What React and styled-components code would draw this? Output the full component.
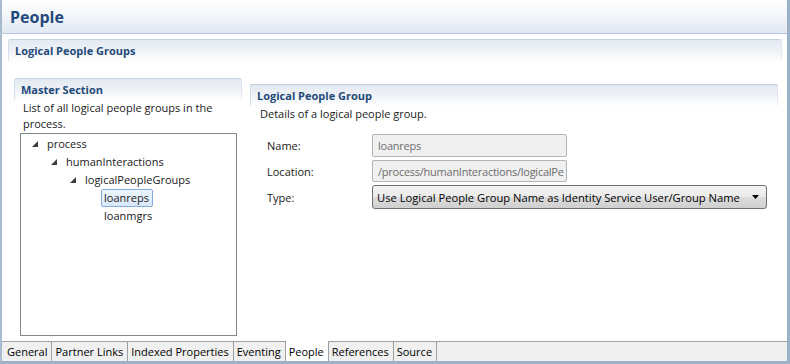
import styled, { createGlobalStyle } from 'styled-components'

const GlobalStyle = createGlobalStyle`
  body {
    margin: 0;
    background: #ffffff;
    font-family: "Open Sans", "Noto Sans", sans-serif;
    font-size: 11px;
    color: #1a1a1a;
  }
`

const Window = styled.div`
  width: 790px;
  height: 364px;
  box-sizing: border-box;
  border-left: 2px solid #a7bace;
  border-right: 3px solid #9db1c6;
  border-bottom: 3px solid #9db1c6;
  display: flex;
  flex-direction: column;
  background: #ffffff;
  overflow: hidden;
`

const TitleBar = styled.div`
  height: 34px;
  box-sizing: border-box;
  flex: none;
  padding-left: 8px;
  display: flex;
  align-items: center;
  background: linear-gradient(to bottom, #ffffff 0%, #f5f7fb 40%, #e1e8f2 100%);
  border-bottom: 1px solid #b4c7dc;
  font-size: 16px;
  font-weight: 700;
  color: #1f4a79;
`

const Content = styled.div`
  flex: 1;
  padding: 5px 5px 0 6px;
  display: flex;
  flex-direction: column;
  min-height: 0;
`

const SectionHead = styled.div`
  height: 22px;
  box-sizing: border-box;
  flex: none;
  display: flex;
  align-items: center;
  padding-left: 6px;
  border: 1px solid #c3d2e3;
  border-bottom: none;
  border-radius: ${p => (p.$square ? '0' : '3px 3px 0 0')};
  border-color: #c3d2e3 rgba(195, 210, 227, 0.3) transparent rgba(195, 210, 227, 0.6);
  background: linear-gradient(to bottom, #e3e9f2 0%, #f1f4f9 60%, #ffffff 100%);
  font-weight: 700;
  color: #1f4a79;
  white-space: nowrap;
`

const Body = styled.div`
  flex: 1;
  display: flex;
  gap: 8px;
  padding: 17px 4px 0 6px;
  min-height: 0;
`

const MasterColumn = styled.div`
  width: 228px;
  flex: none;
  display: flex;
  flex-direction: column;
`

const DetailColumn = styled.div`
  flex: 1;
  margin-top: 6px;
  display: flex;
  flex-direction: column;
`

const Description = styled.div`
  padding: 0 10px 0 ${p => p.$left || 9}px;
  line-height: 16px;
  color: #1a1a1a;
`

const TreeBox = styled.div`
  margin: 1px 5px 5px 6px;
  flex: 1;
  border: 1px solid #828790;
  background: #ffffff;
  padding-top: 1px;
`

const TreeRow = styled.div`
  height: 18px;
  display: flex;
  align-items: center;
  padding-left: ${p => 11 + p.$level * 19}px;
`

const Twisty = styled.span`
  width: 12px;
  height: 18px;
  flex: none;
  display: flex;
  align-items: center;
  justify-content: flex-start;
`

const Label = styled.span`
  padding: 0 3px 0 2px;
  line-height: 16px;
  border: 1px solid ${p => (p.$selected ? '#84acdd' : 'transparent')};
  border-radius: 2px;
  background: ${p => (p.$selected ? 'linear-gradient(to bottom, #eef5fd, #d9e8fb)' : 'transparent')};
`

const Form = styled.div`
  padding: 12px 0 0 17px;
  display: grid;
  grid-template-columns: 105px 1fr;
  row-gap: 3px;
  align-items: center;
`

const FieldLabel = styled.div`
  color: #1a1a1a;
`

const TextBox = styled.div`
  width: 195px;
  height: ${p => p.$h || 23}px;
  box-sizing: border-box;
  border: 1px solid #b3b3b3;
  border-radius: 2px;
  background: #f0f0f0;
  color: #6d6d6d;
  display: flex;
  align-items: center;
  padding-left: 5px;
  letter-spacing: -0.25px;
  white-space: nowrap;
  overflow: hidden;
`

const Combo = styled.div`
  width: 395px;
  height: 24px;
  box-sizing: border-box;
  border: 1px solid #707070;
  border-radius: 3px;
  background: linear-gradient(to bottom, #f3f3f3 0%, #ebebeb 50%, #dddddd 51%, #cfcfcf 100%);
  display: flex;
  align-items: center;
  justify-content: space-between;
  padding: 0 7px 0 4px;
  color: #000000;
  white-space: nowrap;
  font-size: 11.2px;
`

const TabBar = styled.div`
  height: 20px;
  box-sizing: border-box;
  flex: none;
  display: flex;
  padding-left: 2px;
  border-top: 1px solid #a0a0a0;
  background: #f0f0f0;
`

const Tab = styled.div`
  padding: 0 4px 0 3px;
  display: flex;
  align-items: center;
  border-right: 1px solid #a0a0a0;
  background: ${p => (p.$active ? '#ffffff' : 'transparent')};
  margin-top: ${p => (p.$active ? '-1px' : '0')};
  color: #000000;
  white-space: nowrap;
`

const Arrow = () => (
  <svg width="6" height="6" viewBox="0 0 6 6">
    <polygon points="6,0 6,6 0,6" fill="#3c3c3c" />
  </svg>
)

const DropArrow = () => (
  <svg width="7" height="4" viewBox="0 0 7 4">
    <polygon points="0,0 7,0 3.5,4" fill="#000000" />
  </svg>
)

const tree = [
  { label: 'process', level: 0, open: true },
  { label: 'humanInteractions', level: 1, open: true },
  { label: 'logicalPeopleGroups', level: 2, open: true },
  { label: 'loanreps', level: 3, selected: true },
  { label: 'loanmgrs', level: 3 },
]

const tabs = ['General', 'Partner Links', 'Indexed Properties', 'Eventing', 'People', 'References', 'Source']

export default function App() {
  return (
    <>
      <GlobalStyle />
      <Window>
        <TitleBar>People</TitleBar>
        <Content>
          <SectionHead>Logical People Groups</SectionHead>
          <Body>
            <MasterColumn>
              <SectionHead>Master Section</SectionHead>
              <Description>List of all logical people groups in the process.</Description>
              <TreeBox>
                {tree.map(item => (
                  <TreeRow key={item.label} $level={item.level}>
                    <Twisty>{item.open && <Arrow />}</Twisty>
                    <Label $selected={item.selected}>{item.label}</Label>
                  </TreeRow>
                ))}
              </TreeBox>
            </MasterColumn>
            <DetailColumn>
              <SectionHead $square>Logical People Group</SectionHead>
              <Description $left={10}>Details of a logical people group.</Description>
              <Form>
                <FieldLabel>Name:</FieldLabel>
                <TextBox>loanreps</TextBox>
                <FieldLabel>Location:</FieldLabel>
                <TextBox $h={22}>/process/humanInteractions/logicalPe</TextBox>
                <FieldLabel>Type:</FieldLabel>
                <Combo>
                  <span>Use Logical People Group Name as Identity Service User/Group Name</span>
                  <DropArrow />
                </Combo>
              </Form>
            </DetailColumn>
          </Body>
        </Content>
        <TabBar>
          {tabs.map(t => (
            <Tab key={t} $active={t === 'People'}>{t}</Tab>
          ))}
        </TabBar>
      </Window>
    </>
  )
}
